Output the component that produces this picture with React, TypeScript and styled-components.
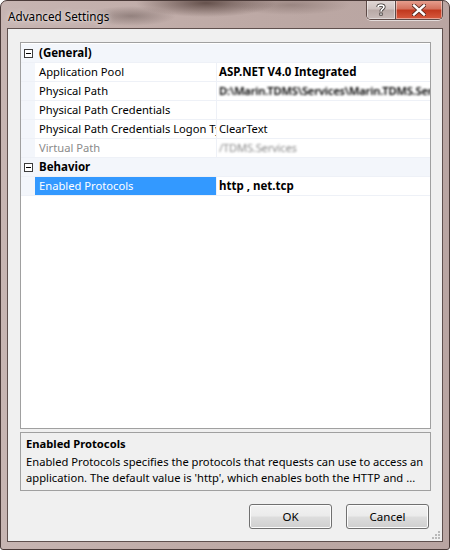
import React from "react";
import styled, { createGlobalStyle } from "styled-components";

const Global = createGlobalStyle`
  html, body { margin: 0; padding: 0; width: 450px; height: 550px; overflow: hidden; background: #ffffff; }
  * { box-sizing: border-box; }
`;

const UI_FONT = `"Noto Sans", "Open Sans", sans-serif`;

const Window = styled.div`
  width: 450px;
  height: 550px;
  display: flex;
  flex-direction: column;
  border: 1px solid #4a3a38;
  border-radius: 7px 7px 3px 3px;
  background:
    radial-gradient(ellipse 70px 14px at 205px 2px, rgba(70, 50, 45, 0.75), transparent),
    radial-gradient(ellipse 45px 10px at 130px 15px, rgba(90, 75, 72, 0.45), transparent),
    radial-gradient(ellipse 60px 10px at 290px 4px, rgba(90, 70, 65, 0.35), transparent),
    linear-gradient(90deg, #c7b5b2 0%, #c0aca8 40%, #bba7a3 70%, #b9a5a2 100%);
  position: relative;
  overflow: hidden;
  font-family: ${UI_FONT};
`;

const TitleBar = styled.div`
  height: 27px;
  flex: none;
  display: flex;
  align-items: flex-start;
  justify-content: space-between;
  padding: 0 6px 0 7px;
`;

const Title = styled.div`
  font-size: 11.7px;
  color: #000;
  line-height: 12px;
  margin-top: 9px;
  text-shadow: 0 0 6px rgba(255, 255, 255, 0.8), 0 0 2px rgba(255, 255, 255, 0.6);
`;

const Captions = styled.div`
  display: flex;
  margin-top: -1px;
  border: 1px solid #5d4a47;
  border-top: none;
  border-radius: 0 0 5px 5px;
  overflow: hidden;
  box-shadow: 0 1px 0 rgba(255, 255, 255, 0.6);
`;

const CapButton = styled.div<{ $close?: boolean }>`
  height: 19px;
  width: ${(p) => (p.$close ? "47px" : "28px")};
  display: flex;
  align-items: center;
  justify-content: center;
  border-left: ${(p) => (p.$close ? "1px solid #5d4a47" : "none")};
  box-shadow: inset 0 0 0 1px rgba(255, 255, 255, 0.45);
  background: ${(p) =>
    p.$close
      ? "linear-gradient(180deg, #e8a393 0%, #d4735f 45%, #c2391f 55%, #d75a3f 100%)"
      : "linear-gradient(180deg, #e2d9d7 0%, #d0c4c2 45%, #b9aaa7 55%, #c8bbb9 100%)"};
`;

const Client = styled.div`
  flex: 1;
  margin: 0 6px 7px 6px;
  border: 1px solid #5f504e;
  background: #f0f0f0;
  display: flex;
  flex-direction: column;
  padding: 13px 11px 12px 12px;
  position: relative;
`;

const Grid = styled.div`
  height: 387px;
  flex: none;
  border: 1px solid #a0a0a0;
  background: #ffffff;
  padding-top: 1px;
  display: flex;
  flex-direction: column;
  overflow: hidden;
`;

const Row = styled.div`
  height: 19px;
  flex: none;
  display: flex;
  border-bottom: 1px solid #eef1f7;
  font-size: 11.2px;
  line-height: 18px;
`;

const Margin = styled.div`
  width: 14px;
  flex: none;
  background: #f3f6fb;
  display: flex;
  align-items: center;
  justify-content: center;
  padding-left: 1px;
`;

const CategoryCell = styled.div`
  flex: 1;
  background: #f3f6fb;
  font-weight: 700;
  font-size: 11.5px;
  color: #000;
  padding-left: 4px;
`;

const NameCell = styled.div<{ $selected?: boolean; $disabled?: boolean }>`
  width: 182px;
  flex: none;
  padding-left: 4px;
  white-space: nowrap;
  overflow: hidden;
  background: ${(p) => (p.$selected ? "#3399ff" : "#ffffff")};
  color: ${(p) => (p.$selected ? "#ffffff" : p.$disabled ? "#8b8b8b" : "#000000")};
  border-right: 1px solid #eef1f7;
`;

const ValueCell = styled.div<{ $bold?: boolean; $disabled?: boolean }>`
  flex: 1;
  padding-left: 2px;
  white-space: nowrap;
  overflow: hidden;
  font-weight: ${(p) => (p.$bold ? 700 : 400)};
  font-size: ${(p) => (p.$bold ? "11.5px" : "11.2px")};
  color: ${(p) => (p.$disabled ? "#8b8b8b" : "#000000")};
`;

const Blurred = styled.span<{ $strength: number; $heavy?: boolean }>`
  display: inline-block;
  filter: blur(${(p) => p.$strength}px);
  font-weight: ${(p) => (p.$heavy ? 600 : 400)};
  letter-spacing: -0.2px;
`;

const Desc = styled.div`
  margin-top: 3px;
  height: 59px;
  flex: none;
  border: 1px solid #a0a0a0;
  padding: 3px 5px 0 5px;
  font-size: 11.2px;
  color: #000;
  white-space: nowrap;
  overflow: hidden;
`;

const DescTitle = styled.div`
  font-weight: 700;
  line-height: 16px;
  margin-bottom: 2px;
`;

const DescText = styled.div`
  line-height: 16px;
`;

const Buttons = styled.div`
  margin-top: 13px;
  display: flex;
  justify-content: flex-end;
  gap: 14px;
  padding-right: 2px;
`;

const Button = styled.div`
  width: 83px;
  height: 25px;
  border: 1px solid #707070;
  border-radius: 3px;
  box-shadow: inset 0 0 0 1px #fcfcfc;
  background: linear-gradient(180deg, #f2f2f2 0%, #ebebeb 48%, #dddddd 52%, #cfcfcf 100%);
  display: flex;
  align-items: center;
  justify-content: center;
  font-size: 11.5px;
  color: #000;
`;

const Grip = styled.svg`
  position: absolute;
  right: 1px;
  bottom: 1px;
`;

const MinusIcon = () => (
  <svg width="9" height="9" viewBox="0 0 9 9">
    <rect x="0.5" y="0.5" width="8" height="8" fill="#ffffff" stroke="#3c3c3c" />
    <line x1="2" y1="4.5" x2="7" y2="4.5" stroke="#000" />
  </svg>
);

const HelpGlyph = () => (
  <svg width="12" height="13" viewBox="0 0 12 13">
    <path d="M3 4 C3 1.5 9 1.5 9 4 C9 6 6 6 6 8.5" fill="none" stroke="#3b3432" strokeWidth="3.2" />
    <path d="M3 4 C3 1.5 9 1.5 9 4 C9 6 6 6 6 8.5" fill="none" stroke="#ffffff" strokeWidth="1.6" />
    <rect x="4.4" y="9.6" width="3.2" height="3" fill="#3b3432" />
    <rect x="5.2" y="10.4" width="1.6" height="1.4" fill="#ffffff" />
  </svg>
);

const CloseGlyph = () => (
  <svg width="14" height="12" viewBox="0 0 14 12">
    <path d="M2 1.5 L12 10.5 M12 1.5 L2 10.5" stroke="#5a2a20" strokeWidth="4.2" strokeLinecap="square" />
    <path d="M2 1.5 L12 10.5 M12 1.5 L2 10.5" stroke="#ffffff" strokeWidth="2.4" strokeLinecap="square" />
  </svg>
);

type Prop = {
  name: string;
  value: React.ReactNode;
  bold?: boolean;
  disabled?: boolean;
  selected?: boolean;
};

const general: Prop[] = [
  { name: "Application Pool", value: "ASP.NET V4.0 Integrated", bold: true },
  {
    name: "Physical Path",
    value: (
      <Blurred $strength={0.9} $heavy>
        D:\Marin.TDMS\Services\Marin.TDMS.Services
      </Blurred>
    ),
  },
  { name: "Physical Path Credentials", value: "" },
  { name: "Physical Path Credentials Logon Type", value: "ClearText" },
  {
    name: "Virtual Path",
    value: <Blurred $strength={0.8}>/TDMS.Services</Blurred>,
    disabled: true,
  },
];

const behavior: Prop[] = [
  { name: "Enabled Protocols", value: "http , net.tcp", bold: true, selected: true },
];

const Category = ({ label }: { label: string }) => (
  <Row>
    <Margin>
      <MinusIcon />
    </Margin>
    <CategoryCell>{label}</CategoryCell>
  </Row>
);

const PropRow = ({ p }: { p: Prop }) => (
  <Row>
    <Margin />
    <NameCell $selected={p.selected} $disabled={p.disabled}>
      {p.name}
    </NameCell>
    <ValueCell $bold={p.bold} $disabled={p.disabled}>
      {p.value}
    </ValueCell>
  </Row>
);

export default function App() {
  return (
    <>
      <Global />
      <Window>
        <TitleBar>
          <Title>Advanced Settings</Title>
          <Captions>
            <CapButton>
              <HelpGlyph />
            </CapButton>
            <CapButton $close>
              <CloseGlyph />
            </CapButton>
          </Captions>
        </TitleBar>
        <Client>
          <Grid>
            <Category label="(General)" />
            {general.map((p) => (
              <PropRow key={p.name} p={p} />
            ))}
            <Category label="Behavior" />
            {behavior.map((p) => (
              <PropRow key={p.name} p={p} />
            ))}
          </Grid>
          <Desc>
            <DescTitle>Enabled Protocols</DescTitle>
            <DescText>Enabled Protocols specifies the protocols that requests can use to access an</DescText>
            <DescText>application. The default value is 'http', which enables both the HTTP and ...</DescText>
          </Desc>
          <Buttons>
            <Button>OK</Button>
            <Button>Cancel</Button>
          </Buttons>
          <Grip width="11" height="11" viewBox="0 0 11 11">
            {[
              [8, 0],
              [8, 3],
              [5, 3],
              [8, 6],
              [5, 6],
              [2, 6],
            ].map(([x, y], i) => (
              <rect key={i} x={x} y={y + 2} width="2" height="2" fill="#b9b9b9" />
            ))}
          </Grip>
        </Client>
      </Window>
    </>
  );
}
